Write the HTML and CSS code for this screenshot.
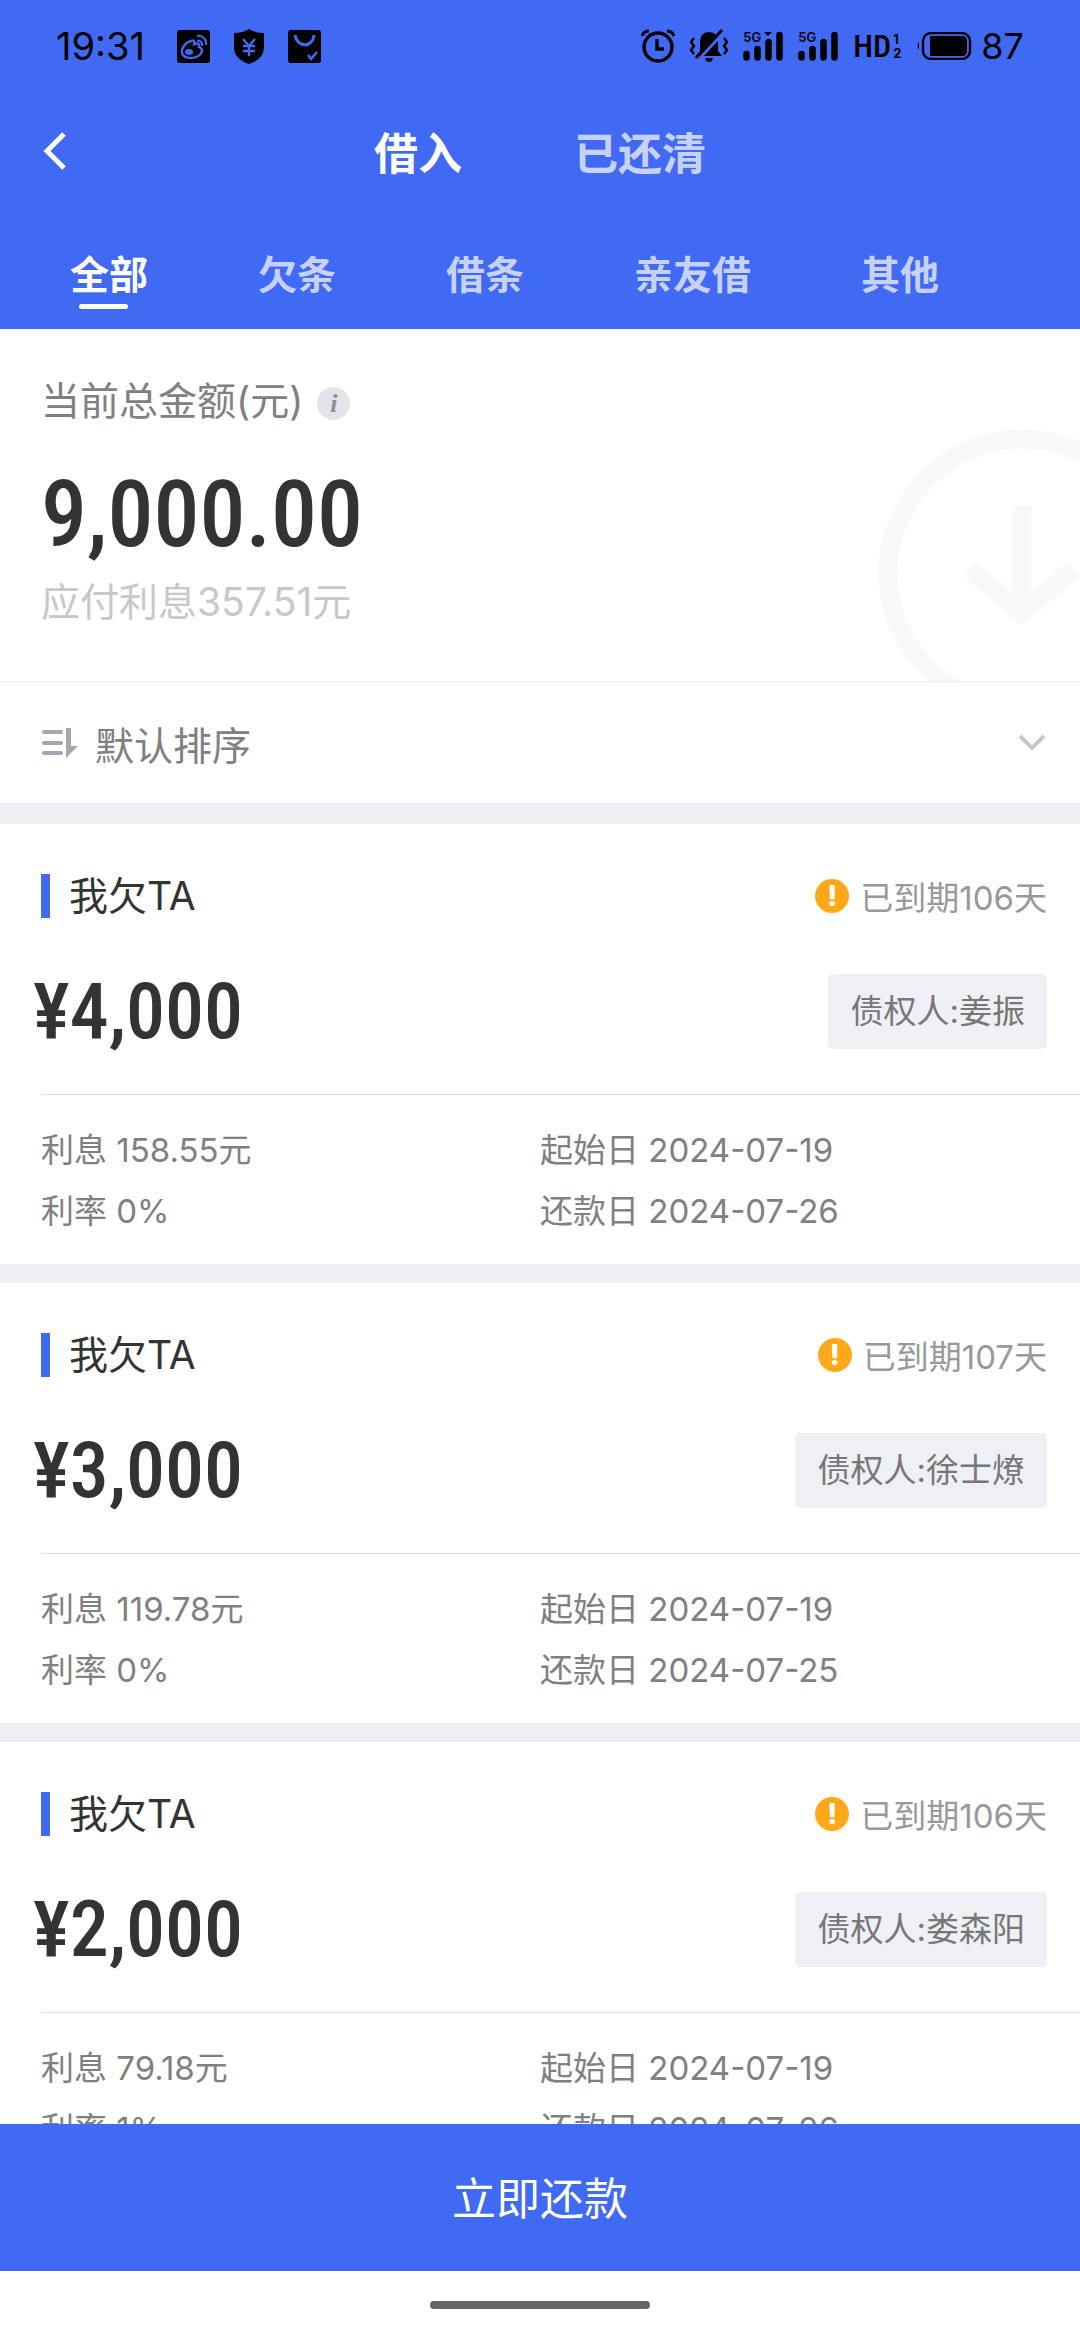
FILE: index.html
```
<!DOCTYPE html>
<html lang="zh-CN">
<head>
    <meta charset="UTF-8">
    <meta name="viewport" content="width=device-width, initial-scale=1.0">
    <title>借入</title>
    <link rel="stylesheet" href="styles.css">
</head>
<body>
    <header class="header">
        <div class="status-bar">
            <div class="status-left">
                <span class="clock">19:31</span>
                <svg width="33" height="33" viewBox="0 0 33 33">
                    <rect width="33" height="33" rx="3"/>
                    <g fill="none" stroke="#4069f4" stroke-width="2">
                        <path d="M14 11C9 12 4 18 5 23C6 28 14 29 19 27C25 25 27 19 22 17C23 13 20 13 17 14C18 10 16 10 14 11Z" stroke-width="2.4"/>
                        <path d="M20 11C23 10 26 13 25 16"/>
                        <path d="M20 6C26 5 30 10 29 15"/>
                        <ellipse cx="12" cy="22" rx="4" ry="3" fill="#4069f4" stroke="none"/>
                    </g>
                </svg>
                <svg width="30" height="35" viewBox="0 0 30 35">
                    <path d="M15 0Q21 4 30 4V18Q30 30 15 35Q0 30 0 18V4Q9 4 15 0Z"/>
                    <path d="M9 10L15 17L21 10M15 17V27M9 17H21M9 22H21" fill="none" stroke="#4069f4" stroke-width="2.4"/>
                </svg>
                <svg width="33" height="33" viewBox="0 0 33 33">
                    <rect width="33" height="33" rx="3"/>
                    <path d="M7 5C9 18 25 18 26 5" fill="none" stroke="#4069f4" stroke-width="3"/>
                    <path d="M20 25L23 29L29 22" fill="none" stroke="#4069f4" stroke-width="2.6"/>
                </svg>
            </div>
            <div class="status-right">
                <svg width="34" height="34" viewBox="0 0 34 34">
                    <circle cx="17" cy="18" r="14" fill="none" stroke="#000" stroke-width="3.4"/>
                    <path d="M16 10V20H23" fill="none" stroke="#000" stroke-width="3.4"/>
                    <path d="M1 7Q3 2 8 2M33 7Q31 2 26 2" fill="none" stroke="#000" stroke-width="3"/>
                </svg>
                <svg width="38" height="34" viewBox="0 0 38 34">
                    <path d="M10 22V14Q10 3 19 3Q28 3 28 14V22L32 27H6Z"/>
                    <path d="M15 29H23Q22 33 19 33Q16 33 15 29Z"/>
                    <path d="M35 2L10 29" stroke="#4069f4" stroke-width="3"/>
                    <path d="M32 1L6 29" stroke="#000" stroke-width="3"/>
                    <path d="M4 9L1 13L4 17L1 21L4 25M34 9L37 13L34 17L37 21L34 25" fill="none" stroke="#000" stroke-width="2.4"/>
                </svg>
                <div class="signal">
                    <span class="net">5G</span>
                    <svg width="40" height="30" viewBox="0 0 40 30">
                        <path d="M3.5 23V26.5M14.5 18V26.5M25.5 11V26.5M36.5 4V26.5" stroke="#000" stroke-width="6.5" stroke-linecap="round"/>
                        <path d="M21 1H29L25 5Z"/>
                    </svg>
                </div>
                <div class="signal">
                    <span class="net">5G</span>
                    <svg width="40" height="30" viewBox="0 0 40 30">
                        <path d="M3.5 23V26.5M14.5 18V26.5M25.5 11V26.5M36.5 4V26.5" stroke="#000" stroke-width="6.5" stroke-linecap="round"/>
                    </svg>
                </div>
                <div class="volte">
                    <span class="hd">HD</span>
                    <span class="sims"><span>1</span><span>2</span></span>
                </div>
                <svg width="56" height="28" viewBox="0 0 56 28">
                    <path d="M3 10Q0 14 3 18Z"/>
                    <rect x="7" y="1" width="47" height="26" rx="8" fill="none" stroke="#000" stroke-width="2.4"/>
                    <path d="M14 4H46Q51 4 51 9V19Q51 24 46 24H14Z"/>
                </svg>
                <span class="battery">87</span>
            </div>
        </div>
        <div class="nav-bar">
            <button class="back" aria-label="返回">
                <svg width="26" height="40" viewBox="0 0 26 40">
                    <path d="M22 3L5 20L22 37" fill="none" stroke="#fff" stroke-width="5"/>
                </svg>
            </button>
            <nav class="titles">
                <a href="#" class="active">借入</a>
                <a href="#">已还清</a>
            </nav>
        </div>
        <nav class="tabs">
            <a href="#" class="active">全部</a>
            <a href="#">欠条</a>
            <a href="#">借条</a>
            <a href="#">亲友借</a>
            <a href="#">其他</a>
        </nav>
    </header>

    <main class="content">
        <section class="summary">
            <svg class="summary-bg" width="288" height="288" viewBox="0 0 288 288">
                <circle cx="144" cy="144" r="134" fill="none" stroke="#f8f8f8" stroke-width="19"/>
                <path d="M144 77V180M92 140L144 184L196 140" fill="none" stroke="#f8f8f8" stroke-width="19"/>
            </svg>
            <div class="summary-label">
                当前总金额(元)
                <button class="info" aria-label="说明">i</button>
            </div>
            <div class="total">9,000.00</div>
            <div class="total-interest">应付利息357.51元</div>
        </section>

        <button class="sort">
            <svg width="38" height="32" viewBox="0 0 38 32">
                <path d="M3 5H20M3 16H20M3 26H20" stroke="#a4a7b2" stroke-width="4" stroke-linecap="round"/>
                <path d="M25 1H30V19H37L25 31Z" fill="#a4a7b2"/>
            </svg>
            <span>默认排序</span>
            <svg class="arrow" width="28" height="18" viewBox="0 0 28 18">
                <path d="M2 2L14 14L26 2" fill="none" stroke="#c8c8c8" stroke-width="4"/>
            </svg>
        </button>

        <article class="card">
            <div class="card-head">
                <h2>我欠TA</h2>
                <span class="overdue"><i>!</i>已到期106天</span>
            </div>
            <div class="card-amount">
                <span class="amount">¥4,000</span>
                <span class="creditor">债权人:姜振</span>
            </div>
            <div class="card-detail">
                <span>利息 158.55元</span>
                <span>起始日 2024-07-19</span>
                <span>利率 0%</span>
                <span>还款日 2024-07-26</span>
            </div>
        </article>

        <article class="card">
            <div class="card-head">
                <h2>我欠TA</h2>
                <span class="overdue"><i>!</i>已到期107天</span>
            </div>
            <div class="card-amount">
                <span class="amount">¥3,000</span>
                <span class="creditor">债权人:徐士燎</span>
            </div>
            <div class="card-detail">
                <span>利息 119.78元</span>
                <span>起始日 2024-07-19</span>
                <span>利率 0%</span>
                <span>还款日 2024-07-25</span>
            </div>
        </article>

        <article class="card">
            <div class="card-head">
                <h2>我欠TA</h2>
                <span class="overdue"><i>!</i>已到期106天</span>
            </div>
            <div class="card-amount">
                <span class="amount">¥2,000</span>
                <span class="creditor">债权人:娄森阳</span>
            </div>
            <div class="card-detail">
                <span>利息 79.18元</span>
                <span>起始日 2024-07-19</span>
                <span>利率 1%</span>
                <span>还款日 2024-07-26</span>
            </div>
        </article>
    </main>

    <footer class="footer">
        <button class="repay">立即还款</button>
        <div class="home-bar"></div>
    </footer>
</body>
</html>
```
FILE: styles.css
```
:root {
    --primary-color: #4069f4;
    --gap-color: #eeeff4;
    --text-color: #333;
    --gray: #808080;
    --number-font: 'Roboto Condensed', 'Roboto', sans-serif;
}

* {
    box-sizing: border-box;
}

body {
    margin: 0;
    height: 100vh;
    display: flex;
    flex-direction: column;
    overflow: hidden;
    background: #fff;
    color: var(--text-color);
    font-family: 'Inter', 'Noto Sans CJK SC', sans-serif;
    font-size: 33px;
}

a {
    color: inherit;
    text-decoration: none;
}

button {
    margin: 0;
    padding: 0;
    border: none;
    background: none;
    color: inherit;
    font: inherit;
    cursor: pointer;
}

svg {
    display: block;
    flex: none;
}

/* header */
.header {
    flex: none;
    background: var(--primary-color);
    color: #fff;
}

.status-bar {
    display: flex;
    align-items: center;
    justify-content: space-between;
    height: 92px;
    padding: 0 56px;
    color: #000;
}

.status-left {
    display: flex;
    align-items: center;
    gap: 24px;
}

.status-right {
    display: flex;
    align-items: center;
    gap: 15px;
}

.clock {
    margin-right: 8px;
    font-size: 38px;
}

.battery {
    margin-left: -6px;
    font-size: 36px;
}

.signal {
    position: relative;
}

.net {
    position: absolute;
    top: 0;
    left: 0;
    font-size: 13px;
    font-weight: 600;
    line-height: 13px;
}

.volte {
    display: flex;
    align-items: center;
    gap: 2px;
}

.hd {
    font-family: var(--number-font);
    font-size: 32px;
    font-weight: 500;
    line-height: 32px;
}

.sims {
    display: flex;
    flex-direction: column;
    font-size: 13px;
    font-weight: bold;
    line-height: 14px;
}

.nav-bar {
    display: grid;
    grid-template-columns: 80px 1fr 80px;
    align-items: center;
    height: 118px;
}

.back {
    justify-self: end;
    margin-right: 12px;
}

.titles {
    display: flex;
    justify-content: center;
    gap: 112px;
    font-size: 44px;
    font-weight: bold;
}

.titles a,
.tabs a {
    opacity: 0.7;
}

.titles .active,
.tabs .active {
    opacity: 1;
}

.tabs {
    display: flex;
    gap: 110px;
    height: 119px;
    padding: 36px 70px 0;
    font-size: 39px;
    font-weight: bold;
    line-height: 58px;
}

.tabs .active::after {
    content: '';
    display: block;
    width: 49px;
    height: 5px;
    margin-left: 9px;
    border-radius: 3px;
    background: #fff;
}

/* content */
.content {
    flex: 1;
    min-height: 0;
    overflow: hidden;
    background: var(--gap-color);
}

.summary {
    position: relative;
    overflow: hidden;
    height: 353px;
    padding: 40px 41px 0;
    border-bottom: 1px solid #eee;
    background: #fff;
}

.summary-bg {
    position: absolute;
    top: 100px;
    right: -86px;
}

.summary-label {
    display: flex;
    align-items: center;
    gap: 14px;
    height: 58px;
    color: var(--gray);
    font-size: 39px;
}

.info {
    width: 33px;
    height: 33px;
    margin-top: 10px;
    border-radius: 50%;
    background: #e3e4ea;
    color: #8c8e98;
    font-family: 'Liberation Serif', serif;
    font-size: 26px;
    font-style: italic;
    font-weight: bold;
    line-height: 33px;
}

.total {
    margin-top: 30px;
    font-family: var(--number-font);
    font-size: 92px;
    font-weight: 500;
    line-height: 116px;
}

.total-interest {
    color: #c8c8c8;
    font-size: 39px;
    line-height: 58px;
}

.sort {
    display: flex;
    align-items: center;
    width: 100%;
    height: 121px;
    margin-bottom: 21px;
    padding: 0 34px 0 41px;
    background: #fff;
    color: var(--gray);
    font-size: 39px;
}

.sort span {
    margin-left: 16px;
}

.arrow {
    margin-left: auto;
}

/* loan cards */
.card {
    height: 440px;
    margin-bottom: 19px;
    padding-top: 50px;
    background: #fff;
}

.card-head,
.card-amount {
    display: flex;
    align-items: center;
    justify-content: space-between;
    padding: 0 33px 0 41px;
}

.card-head {
    height: 44px;
}

.card-head h2 {
    margin: 0;
    padding-left: 19px;
    border-left: 9px solid var(--primary-color);
    font-size: 39px;
    font-weight: normal;
    line-height: 44px;
}

.overdue {
    display: flex;
    align-items: center;
    gap: 11px;
    color: #999;
}

.overdue i {
    width: 34px;
    height: 34px;
    border-radius: 50%;
    background: #ffa91a;
    color: #fff;
    font-size: 28px;
    font-style: normal;
    font-weight: 800;
    line-height: 34px;
    text-align: center;
}

.card-amount {
    height: 75px;
    margin-top: 56px;
    padding-left: 33px;
}

.amount {
    font-family: var(--number-font);
    font-size: 78px;
    font-weight: 500;
}

.creditor {
    padding: 0 22px;
    border-radius: 5px;
    background: #eff0f5;
    color: #777;
    line-height: 75px;
}

.card-detail {
    display: grid;
    grid-template-columns: 499px 1fr;
    margin: 45px 0 0 41px;
    padding-top: 25px;
    border-top: 1px solid #ddd;
    color: var(--gray);
    line-height: 61px;
}

/* footer */
.footer {
    flex: none;
    background: #fff;
}

.repay {
    width: 100%;
    height: 147px;
    padding-bottom: 4px;
    background: var(--primary-color);
    color: #fff;
    font-size: 44px;
}

.home-bar {
    width: 220px;
    height: 8px;
    margin: 30px auto 31px;
    border-radius: 4px;
    background: #666;
}
```
